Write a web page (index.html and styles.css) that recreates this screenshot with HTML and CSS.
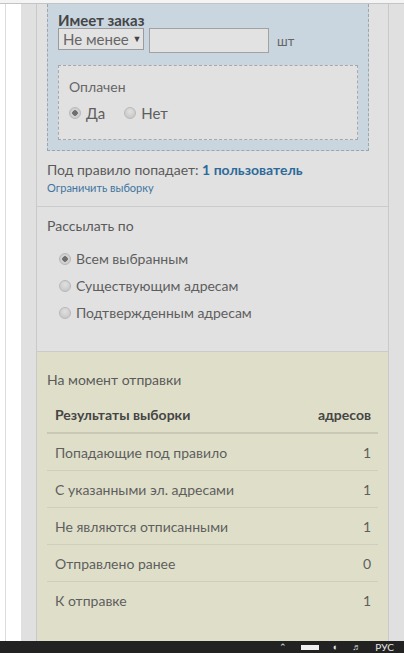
FILE: index.html
```html
<!DOCTYPE html>
<html lang="ru">
<head>
    <meta charset="UTF-8">
    <meta name="viewport" content="width=device-width, initial-scale=1.0">
    <title>Рассылка - условия</title>
    <link rel="stylesheet" href="styles.css">
</head>
<body>

    <div class="topline"></div>

    <div class="main">
        <div class="gutter"></div>

        <div class="column">
            <div class="panel">

                <!-- Rule + counter -->
                <div class="section rule-section">
                    <div class="rule-box">
                        <div class="rule-title">Имеет заказ</div>
                        <div class="rule-row">
                            <div class="select">Не менее <span class="arrow">&#9660;</span></div>
                            <div class="input"></div>
                            <span class="unit">шт</span>
                        </div>
                        <div class="sub-box">
                            <div class="sub-title">Оплачен</div>
                            <div class="radio-inline">
                                <label class="radio"><span class="dot checked"></span>Да</label>
                                <label class="radio"><span class="dot"></span>Нет</label>
                            </div>
                        </div>
                    </div>

                    <p class="rule-count">Под правило попадает: <a href="#" class="count-link">1 пользователь</a></p>
                    <a href="#" class="small-link">Ограничить выборку</a>
                </div>

                <!-- Send to -->
                <div class="section send-section">
                    <p class="label">Рассылать по</p>
                    <label class="radio row"><span class="dot checked"></span>Всем выбранным</label>
                    <label class="radio row"><span class="dot"></span>Существующим адресам</label>
                    <label class="radio row"><span class="dot"></span>Подтвержденным адресам</label>
                </div>

                <!-- Results -->
                <div class="section results">
                    <p class="label">На момент отправки</p>
                    <table class="stats">
                        <thead>
                            <tr><th>Результаты выборки</th><th class="num">адресов</th></tr>
                        </thead>
                        <tbody>
                            <tr><td>Попадающие под правило</td><td class="num">1</td></tr>
                            <tr><td>С указанными эл. адресами</td><td class="num">1</td></tr>
                            <tr><td>Не являются отписанными</td><td class="num">1</td></tr>
                            <tr><td>Отправлено ранее</td><td class="num">0</td></tr>
                            <tr><td>К отправке</td><td class="num">1</td></tr>
                        </tbody>
                    </table>
                </div>

            </div>
        </div>
    </div>

    <!-- OS taskbar at the bottom of the shot -->
    <div class="taskbar">
        <span class="tray">&#8963;</span>
        <span class="battery"></span>
        <span class="tray">&#9680;</span>
        <span class="tray">&#9836;</span>
        <span class="tray lang">РУС</span>
    </div>

</body>
</html>
```

FILE: styles.css
```css
/* General */
html, body {
    height: 100%;
}

body {
    margin: 0;
    padding: 0;
    font-family: 'Lato', 'Liberation Sans', sans-serif;
    font-size: 14px;
    color: #5a5a5a;
    background-color: #ffffff;
    display: flex;
    flex-direction: column;
    overflow: hidden;
}

p {
    margin: 0;
}

.topline {
    height: 3px;
    border-bottom: 1px solid #c4c4c4;
    background: #f4f4f4;
}

.main {
    flex: 1;
    display: flex;
    min-height: 0;
}

.gutter {
    width: 16px;
    margin-left: 5px;
    border-left: 1px solid #dcdcdc;
    background: #ffffff;
}

.column {
    flex: 1;
    background-color: #e0e0e0;
    padding: 0 15px;
    display: flex;
}

.panel {
    flex: 1;
    background-color: #e1e1e1;
    border-left: 1px solid #c9c9c9;
    border-right: 1px solid #c9c9c9;
    display: flex;
    flex-direction: column;
}

/* Sections */
.section {
    padding: 0 10px;
}

.rule-section {
    padding-bottom: 11px;
    border-bottom: 1px solid #cbcbcb;
}

.rule-box {
    margin-right: 9px;
    padding: 8px 10px 10px;
    background-color: #c9d6e0;
    border: 1px dashed #9aa6b0;
    border-top: none;
}

.rule-title {
    font-weight: 700;
    color: #454545;
    font-size: 15px;
    line-height: 16px;
}

.rule-row {
    display: flex;
    align-items: flex-start;
}

.select {
    box-sizing: border-box;
    width: 86px;
    height: 22px;
    padding: 0 4px;
    line-height: 20px;
    border: 1px solid #9b9b9b;
    background: #e3e3e3;
    color: #666;
    font-size: 15px;
    white-space: nowrap;
}

.arrow {
    font-size: 9px;
    vertical-align: 3px;
    color: #444;
}

.input {
    box-sizing: border-box;
    width: 120px;
    height: 25px;
    margin-left: 5px;
    border: 1px solid #a2a2a2;
    background: #e2e2e2;
}

.unit {
    margin-left: 8px;
    line-height: 26px;
    font-size: 13px;
    color: #666;
}

.sub-box {
    margin-top: 11px;
    padding: 12px 10px 17px;
    border: 1px dashed #a8a8a8;
    background-color: #e1e1e1;
}

.sub-title {
    line-height: 18px;
    color: #666;
}

.radio-inline {
    display: flex;
    gap: 19px;
    margin-top: 8px;
}

.radio {
    display: flex;
    align-items: center;
    line-height: 18px;
    color: #5e5e5e;
}

.radio-inline .radio {
    font-size: 15px;
}

.dot {
    box-sizing: border-box;
    width: 12px;
    height: 12px;
    margin-right: 5px;
    border-radius: 50%;
    border: 1px solid #b8b8b8;
    background: radial-gradient(circle at 50% 35%, #e0e0e0, #c2c2c2);
}

.dot.checked {
    background: radial-gradient(circle, #6f6f6f 0 2.5px, #d4d4d4 3px, #c4c4c4);
}

.rule-count {
    margin-top: 10px;
    line-height: 18px;
    color: #5a5a5a;
}

.count-link {
    font-weight: 700;
    color: #2d6a9a;
    text-decoration: none;
}

.small-link {
    display: block;
    margin-top: 2px;
    font-size: 11px;
    line-height: 14px;
    color: #3f74a0;
    text-decoration: none;
}

/* Send to */
.send-section {
    padding-top: 10px;
    padding-bottom: 29px;
    border-bottom: 1px solid #cbcbcb;
}

.label {
    line-height: 18px;
    color: #5a5a5a;
}

.send-section .row {
    margin: 9px 0 0 12px;
}

.send-section .row:first-of-type {
    margin-top: 15px;
}

/* Results */
.results {
    flex: 1;
    padding-top: 19px;
    background-color: #dfdfc9;
}

.stats {
    width: 331px;
    margin-top: 7px;
    border-collapse: collapse;
}

.stats th {
    height: 36px;
    padding: 0 7px 0 8px;
    text-align: left;
    font-weight: 700;
    color: #454545;
    border-bottom: 2px solid #c9c8b6;
}

.stats td {
    height: 36px;
    padding: 0 7px 0 8px;
    color: #5e5e5e;
    border-bottom: 1px solid #cfcebc;
}

.stats tr:last-child td {
    border-bottom: none;
}

.stats .num {
    text-align: right;
}

/* Taskbar */
.taskbar {
    height: 12px;
    background-color: #222222;
    display: flex;
    justify-content: flex-end;
    align-items: center;
    gap: 14px;
    padding-right: 10px;
    overflow: hidden;
    color: #e6e6e6;
    font-size: 9px;
    line-height: 12px;
}

.battery {
    width: 18px;
    height: 5px;
    background: #f0f0f0;
}

.lang {
    font-size: 10px;
}
```
